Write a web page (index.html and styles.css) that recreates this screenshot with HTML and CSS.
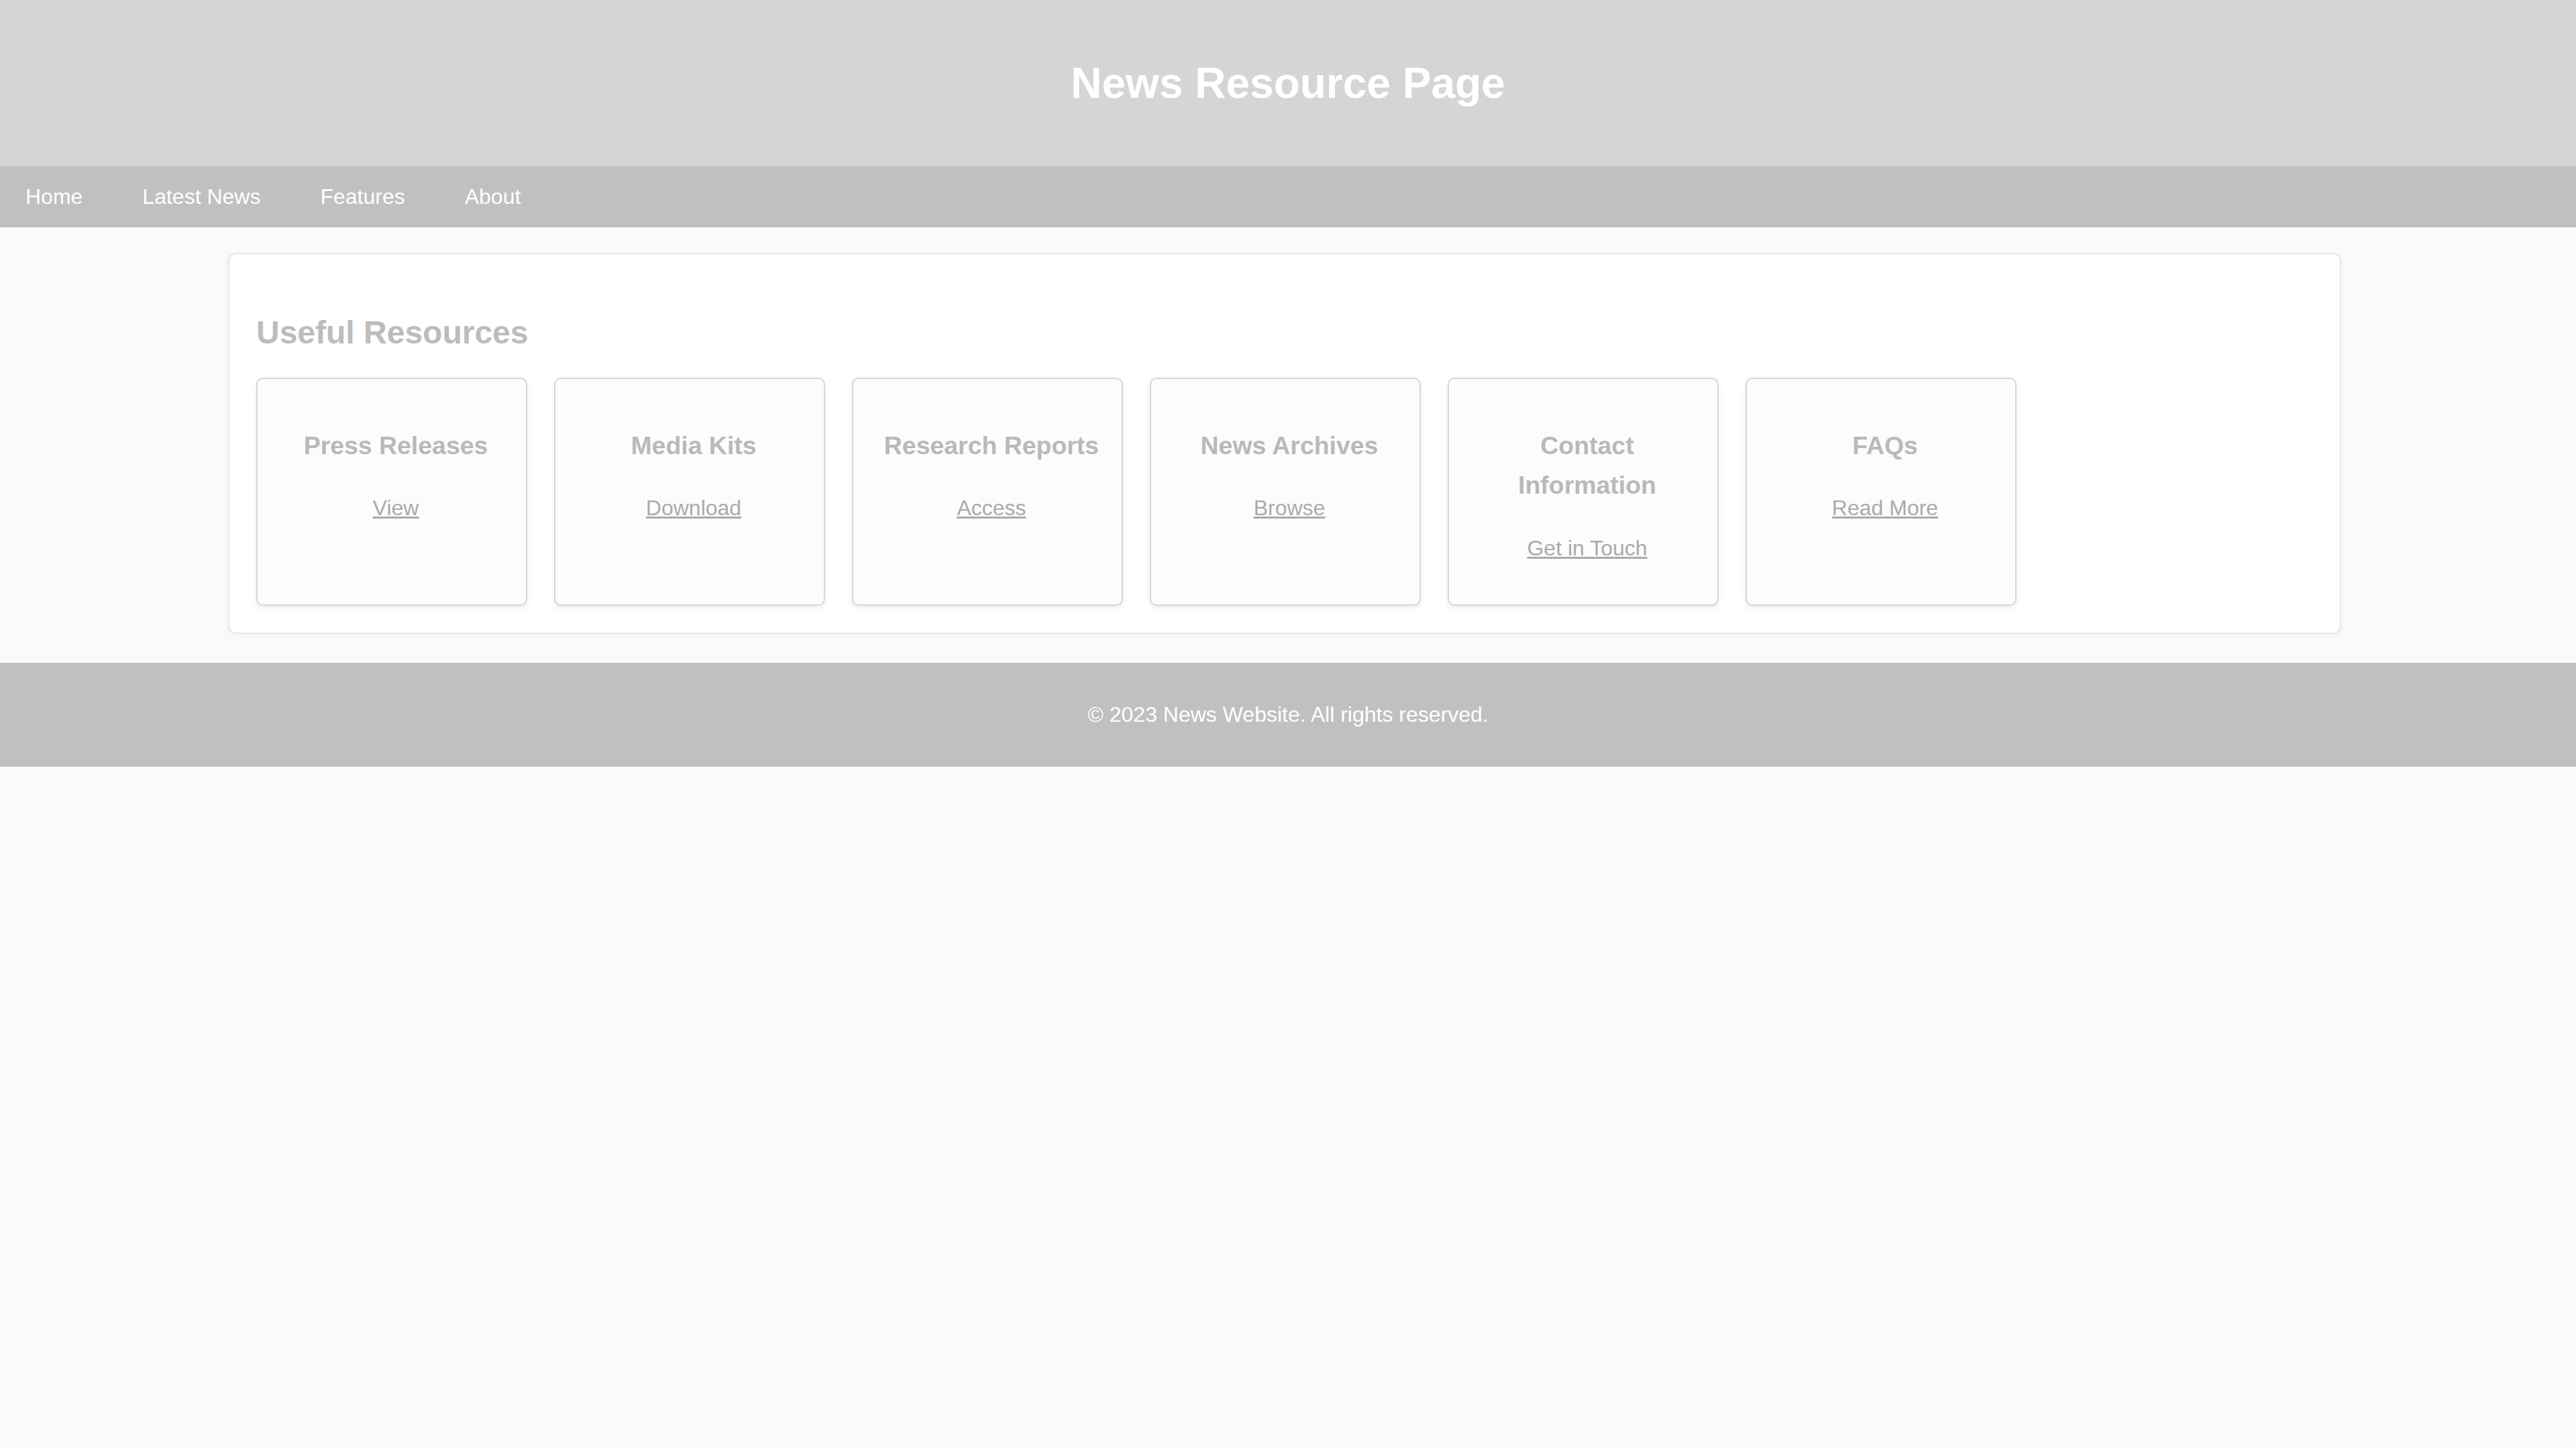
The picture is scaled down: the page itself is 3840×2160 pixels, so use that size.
FILE: index.html
```html
<!DOCTYPE html>
<html lang="en">
<head>
<meta charset="utf-8">
<title>News Resource Page</title>
<link rel="stylesheet" href="styles.css">
</head>
<body>
<header class="site-header">
  <h1 class="site-title">News Resource Page</h1>
</header>
<nav class="site-nav">
  <a href="#" class="nav-link">Home</a>
  <a href="#" class="nav-link">Latest News</a>
  <a href="#" class="nav-link">Features</a>
  <a href="#" class="nav-link">About</a>
</nav>
<main class="container">
  <h2 class="section-title">Useful Resources</h2>
  <div class="resources">
    <div class="resource-card">
      <h3 class="card-title">Press Releases</h3>
      <p class="card-action"><a href="#" class="card-link">View</a></p>
    </div>
    <div class="resource-card">
      <h3 class="card-title">Media Kits</h3>
      <p class="card-action"><a href="#" class="card-link">Download</a></p>
    </div>
    <div class="resource-card">
      <h3 class="card-title">Research Reports</h3>
      <p class="card-action"><a href="#" class="card-link">Access</a></p>
    </div>
    <div class="resource-card">
      <h3 class="card-title">News Archives</h3>
      <p class="card-action"><a href="#" class="card-link">Browse</a></p>
    </div>
    <div class="resource-card">
      <h3 class="card-title">Contact Information</h3>
      <p class="card-action"><a href="#" class="card-link">Get in Touch</a></p>
    </div>
    <div class="resource-card">
      <h3 class="card-title">FAQs</h3>
      <p class="card-action"><a href="#" class="card-link">Read More</a></p>
    </div>
  </div>
</main>
<footer class="site-footer">
  <p class="footer-text">&copy; 2023 News Website. All rights reserved.</p>
</footer>
</body>
</html>
```

FILE: styles.css
```css
html, body {
  margin: 0;
  padding: 0;
}

body {
  background: #fafafa;
  font-family: "Liberation Sans", Arial, sans-serif;
  font-size: 32px;
  line-height: 1.6;
  color: #bbbbbb;
}

.site-header {
  background: #d5d5d5;
  padding: 30px 0;
  text-align: center;
}

.site-title {
  margin: 42.88px 0;
  font-size: 64px;
  font-weight: bold;
  color: #ffffff;
}

.site-nav {
  background: #c0c0c0;
  padding: 20px 38px;
  display: flex;
  gap: 89px;
}

.nav-link {
  color: #ffffff;
  text-decoration: none;
  font-size: 32px;
}

.container {
  background: #ffffff;
  margin: 38px 350px 43px 340px;
  padding: 0 40px 40px 40px;
  border: 2px solid #e6e6e6;
  border-radius: 12px;
  box-shadow: 0 2px 10px rgba(0, 0, 0, 0.04);
  overflow: hidden;
}

.section-title {
  margin: 79px 0 28px 0;
  font-size: 48px;
  font-weight: bold;
  color: #bcbcbc;
}

.resources {
  display: flex;
  gap: 40px;
  align-items: stretch;
}

.resource-card {
  box-sizing: border-box;
  width: 404px;
  flex: 0 0 404px;
  background: #fcfcfc;
  border: 2px solid #d6d6d6;
  border-radius: 10px;
  box-shadow: 0 4px 8px rgba(0, 0, 0, 0.07);
  padding: 32px 25px 26px 37px;
  text-align: center;
}

.card-title {
  margin: 37.44px 0;
  font-size: 37.44px;
  font-weight: bold;
  color: #b9b9b9;
}

.card-action {
  margin: 32px 0;
}

.card-link {
  color: #aaaaaa;
  text-decoration: underline;
  font-size: 32px;
}

.site-footer {
  background: #c0c0c0;
  padding: 20px 0;
  text-align: center;
}

.footer-text {
  margin: 32px 0;
  color: #ffffff;
  font-size: 32px;
}
```
